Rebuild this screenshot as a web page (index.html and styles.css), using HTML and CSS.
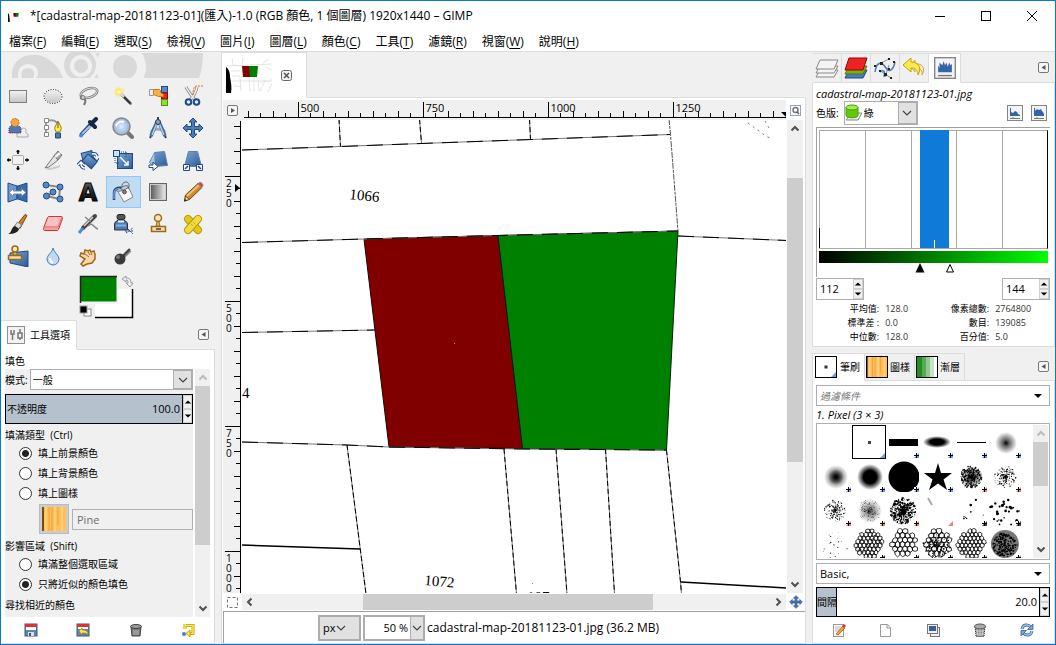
FILE: index.html
```html
<!DOCTYPE html>
<html lang="zh-Hant">
<head>
<meta charset="utf-8">
<meta name="viewport" content="width=device-width, initial-scale=1">
<title>*[cadastral-map-20181123-01](匯入)-1.0 – GIMP</title>
<link rel="stylesheet" href="styles.css">
</head>
<body>
<svg class="defs" aria-hidden="true">
  <defs>
    <linearGradient id="steel" x1="0" y1="0" x2="1" y2="1"><stop offset="0" stop-color="#7ba6d4"/><stop offset="1" stop-color="#2c5b96"/></linearGradient>
    <linearGradient id="silver" x1="0" y1="0" x2="0" y2="1"><stop offset="0" stop-color="#f4f4f4"/><stop offset="1" stop-color="#c4c4c4"/></linearGradient>
    <linearGradient id="fade" x1="0" y1="0" x2="1" y2="0"><stop offset="0" stop-color="#505050"/><stop offset="1" stop-color="#f4f4f4"/></linearGradient>
    <linearGradient id="dark" x1="0" y1="0" x2="0" y2="1"><stop offset="0" stop-color="#777"/><stop offset="0.5" stop-color="#222"/><stop offset="1" stop-color="#000"/></linearGradient>
    <radialGradient id="lens"><stop offset="0" stop-color="#e0ecfa"/><stop offset="1" stop-color="#8fb3dc"/></radialGradient>
    <radialGradient id="glow"><stop offset="0" stop-color="#fff"/><stop offset="0.4" stop-color="#fbe960"/><stop offset="1" stop-color="#fbe960" stop-opacity="0"/></radialGradient>
    <radialGradient id="soft"><stop offset="0" stop-color="#000"/><stop offset="0.3" stop-color="#000" stop-opacity="0.6"/><stop offset="1" stop-color="#000" stop-opacity="0"/></radialGradient>
    <radialGradient id="firm"><stop offset="0.5" stop-color="#000"/><stop offset="1" stop-color="#000" stop-opacity="0"/></radialGradient>
    <symbol id="chevron" viewBox="0 0 10 10"><path d="M1 3l4 4 4-4" fill="none" stroke="currentColor" stroke-width="1.200"/></symbol>
    <symbol id="arrow-down" viewBox="0 0 10 10"><path d="M1 3h8L5 7z" fill="currentColor"/></symbol>
    <symbol id="arrow-up" viewBox="0 0 10 10"><path d="M1 7h8L5 3z" fill="currentColor"/></symbol>
    <symbol id="scroll" viewBox="0 0 10 10"><path d="M1.500 6.500L5 3l3.500 3.500" fill="none" stroke="currentColor" stroke-width="2"/></symbol>
    <symbol id="collapse" viewBox="0 0 11 11"><rect x=".5" y=".5" width="10" height="10" rx="1.500" fill="#f6f6f6" stroke="#777"/><path d="M7.500 3v5L3.500 5.500z" fill="#555"/></symbol>
    <symbol id="thumb" viewBox="0 0 48 36">
      <rect width="48" height="36" fill="#fff"/>
      <path d="M6 1l1 7 9 1 1-9M0 9l46-2M5 14h12M6 19h11M5 24h41M28 20v14M23 20l1 14M32 22l1 12M14 20l1 14M35 26l4-3 3 2 4-3M34 34l5-10M42 35l4-9M37 6l6-4M40 10l6 3M8 29l8 1" fill="none" stroke="#dedede" stroke-width=".8"/>
      <path d="M0 10c3 2 4 6 4 10 1 5 2 11 1 16H0z" fill="#000"/>
      <path d="M16 9h8l1 11h-8z" fill="#800000"/><path d="M23 9h9l-1 11h-7z" fill="#008000"/>
    </symbol>
    <symbol id="histo" viewBox="0 0 16 16"><rect x=".5" y=".5" width="15" height="15" fill="#f4f4f4" stroke="#858585"/><path d="M3 11V6l1 2V4l2 2 1-3 1 3 1-2 1 3 1-3 1 2 1-1v6z" fill="#3465a4"/><path d="M3 13.500h10" stroke="#777"/></symbol>
    <symbol id="histo-linear" viewBox="0 0 16 16"><rect x=".5" y=".5" width="15" height="15" fill="#f4f4f4" stroke="#858585"/><path d="M3 11V3h1v4l2 1 2-2 2 1 1 2 2 1v1z" fill="#3465a4"/><path d="M3 13.500h10M6 12v2" stroke="#777"/></symbol>
    <symbol id="histo-log" viewBox="0 0 16 16"><rect x=".5" y=".5" width="15" height="15" fill="#f4f4f4" stroke="#858585"/><path d="M3 11V3h1v3l2-2 2 1 2-1 1 2 1 1 1 2v2z" fill="#3465a4"/><path d="M3 13.500h10M6 12v2" stroke="#777"/></symbol>
    <symbol id="pine" viewBox="0 0 24 24" preserveAspectRatio="none"><rect width="24" height="24" fill="#ffbe5a"/><path d="M1 0v24" stroke="#7a4a10" stroke-width="2"/><path d="M4 0v24M13 0v24M20 0v24" stroke="#ffd27a" stroke-width="2"/><path d="M7 0v24M16 0v18" stroke="#f2a03a"/><path d="M10 0v24" stroke="#f9ae48" stroke-width="2"/></symbol>
    <symbol id="cross" viewBox="0 0 22 22"><path d="M11 1l4 4h-2.500v4.500H17V7l4 4-4 4v-2.500h-4.500V17H15l-4 4-4-4h2.500v-4.500H5V15l-4-4 4-4v2.500h4.500V5H7z" fill="#4a7ab8" stroke="#204a87"/></symbol>
  </defs>
</svg>

<div class="app">
  <header class="titlebar">
    <svg class="app-icon" viewBox="0 0 48 36" width="16" height="12" aria-hidden="true"><use href="#thumb"/></svg>
    <h1>*[cadastral-map-20181123-01](匯入)-1.0 (RGB 顏色, 1 個圖層) 1920x1440 – GIMP</h1>
    <div class="window-buttons">
      <button aria-label="最小化"><svg width="12" height="12"><path d="M1 6.500h10" stroke="#000"/></svg></button>
      <button aria-label="最大化"><svg width="12" height="12"><rect x="1.500" y="1.500" width="9" height="9" fill="none" stroke="#000"/></svg></button>
      <button aria-label="關閉"><svg width="12" height="12"><path d="M1 1l10 10M11 1L1 11" stroke="#000"/></svg></button>
    </div>
  </header>

  <nav class="menubar">
    <button>檔案(<u>F</u>)</button><button>編輯(<u>E</u>)</button><button>選取(<u>S</u>)</button><button>檢視(<u>V</u>)</button><button>圖片(<u>I</u>)</button><button>圖層(<u>L</u>)</button><button>顏色(<u>C</u>)</button><button>工具(<u>T</u>)</button><button>濾鏡(<u>R</u>)</button><button>視窗(<u>W</u>)</button><button>說明(<u>H</u>)</button>
  </nav>

  <main class="workspace">
    <aside class="dock left">
      <svg class="banner" height="28" aria-hidden="true">
        <path d="M11 26C10 10 20 3 33 3c13 0 20 8 28 18l2 5zM60 1h142c0 9-1 17-4 25H60z" fill="#d9d9d9"/>
        <path d="M17 26c-1-9 4-14 10-14s10 4 10 9-3 5-5 5z" fill="#f0f0f0"/><path d="M21 26c-2-6 1-10 6-10s8 5 5 10z" fill="#d9d9d9"/>
        <path d="M52 0h10l-3 16z" fill="#f0f0f0"/>
        <circle cx="78" cy="13" r="20" fill="#f0f0f0"/><circle cx="79" cy="13" r="16" fill="#d9d9d9"/><circle cx="80" cy="14" r="11" fill="#f0f0f0"/><circle cx="80" cy="14" r="7" fill="#d9d9d9"/>
        <circle cx="120" cy="15" r="25" fill="#f0f0f0"/><circle cx="124" cy="15" r="12" fill="#d9d9d9"/>
        <path d="M0 26h214v2H0z" fill="#f0f0f0"/>
      </svg>
      <div class="tools">
        <button aria-label="矩形選取"><svg viewBox="0 0 22 22"><rect x="2.500" y="5.500" width="17" height="12" fill="url(#silver)" stroke="#fff"/><rect x="2.500" y="5.500" width="17" height="12" fill="none" stroke="#000" stroke-dasharray="1 1"/></svg></button>
        <button aria-label="橢圓選取"><svg viewBox="0 0 22 22"><ellipse cx="11" cy="11.500" rx="9" ry="7" fill="url(#silver)" stroke="#fff"/><ellipse cx="11" cy="11.500" rx="9" ry="7" fill="none" stroke="#000" stroke-dasharray="1 1.500"/></svg></button>
        <button aria-label="自由選取"><svg viewBox="0 0 22 22"><ellipse cx="12" cy="8" rx="8.500" ry="4.500" fill="none" stroke="#777" stroke-width="2.500" transform="rotate(-18 12 8)"/><ellipse cx="12" cy="8" rx="8.500" ry="4.500" fill="none" stroke="#ddd" transform="rotate(-18 12 8)"/><path d="M5 11c-2 1-2 3 1 3s3 2 1 6" fill="none" stroke="#777" stroke-width="2"/><circle cx="6" cy="12.500" r="2" fill="#ccc" stroke="#777"/></svg></button>
        <button aria-label="模糊選取"><svg viewBox="0 0 22 22"><path d="M9 9l9.500 9.500" stroke="#888" stroke-width="3" stroke-linecap="round"/><path d="M11 11l7.500 7.500" stroke="#333" stroke-width="2"/><circle cx="7" cy="7" r="6" fill="url(#glow)"/><path d="M8 8l4 4" stroke="#ddd" stroke-width="2"/></svg></button>
        <button aria-label="依顏色選取"><svg viewBox="0 0 22 22"><rect x="14.500" y="1.500" width="6" height="6" fill="#5a8ac6" stroke="#204a87"/><rect x="14.500" y="8" width="6" height="6" fill="#e22" stroke="#900"/><rect x="14.500" y="14.500" width="6" height="6" fill="#8ae234" stroke="#4e9a06"/><path d="M2.500 4.500h4v6h-4z" fill="#eee" stroke="#999"/><path d="M6.500 4.500h6l1 1v2l3 2v2h-5l-5-2z" fill="#fcaf3e" stroke="#ce7a1c"/></svg></button>
        <button aria-label="智慧型剪刀"><svg viewBox="0 0 22 22"><path d="M4 2c2 4 5 8 9 13M15 2c-1 5-3 9-7 13" stroke="#888" stroke-width="3" fill="none"/><path d="M4 2c2 4 5 8 9 13M15 2c-1 5-3 9-7 13" stroke="#eee" fill="none" stroke-width="1.500"/><circle cx="6.500" cy="17" r="2.800" fill="#e8eef6" stroke="#204a87" stroke-width="2"/><circle cx="14.500" cy="17" r="2.800" fill="#e8eef6" stroke="#204a87" stroke-width="2"/><path d="M11 10c0-6 1-9 4-9h7" stroke="#e0780c" fill="none" stroke-dasharray="2 1"/></svg></button>

        <button aria-label="前景選取"><svg viewBox="0 0 22 22"><path d="M13 14c0-3 6-4 6-1 0 2-1 3 2 4v3H10v-3z" fill="#eee" stroke="#aaa"/><path d="M2 16v-4c0-3 3-4 6-4s6 2 6 4v4z" fill="#4a7ab8"/><path d="M2 16v-4c0-3 3-4 6-4s6 2 6 4v4z" fill="none" stroke="#7a1040" stroke-dasharray="1 1"/><circle cx="8" cy="5.500" r="4" fill="#f5a742" stroke="#b8641c" stroke-dasharray="2 1"/></svg></button>
        <button aria-label="路徑"><svg viewBox="0 0 22 22"><path d="M4 4v14M4 4c8-2 11 0 13 5" stroke="#999" stroke-width="2" fill="none"/><path d="M2.500 1.500h4v4h-4zM2.500 8.500h4v4h-4zM2.500 15.500h4v4h-4z" fill="#fff" stroke="#888"/><path d="M13 10l3-6 3 6c1 2-1 4-1 5h-4c0-1-2-3-1-5z" fill="#fce94f" stroke="#a08000"/><path d="M16 5v6" stroke="#555"/><path d="M13.500 16h5v5h-5z" fill="#4a7ab8" stroke="#204a87"/></svg></button>
        <button aria-label="滴管"><svg viewBox="0 0 22 22"><path d="M4 18L14 7" stroke="#204a87" stroke-width="4"/><path d="M5 17l9-9" stroke="#a9c8ec" stroke-width="2"/><path d="M13 5l5 5M14 7l5-5" stroke="#172a45" stroke-width="4" stroke-linecap="round"/><circle cx="4" cy="18.500" r="2" fill="#4a8ad8"/></svg></button>
        <button aria-label="縮放"><svg viewBox="0 0 22 22"><path d="M15 15l5 5" stroke="#777" stroke-width="4" stroke-linecap="round"/><circle cx="9.500" cy="9.500" r="8.500" fill="url(#lens)" stroke="#888" stroke-width="1.500"/><path d="M4 9c1-4 5-5 8-4" stroke="#fff" fill="none" stroke-width="2"/></svg></button>
        <button aria-label="測量"><svg viewBox="0 0 22 22"><path d="M4 15c4-4 10-4 14 0" stroke="#aaa" stroke-width="3" fill="none"/><path d="M10 5L6 14l-2 5M12 5l4 9 2 5" stroke="#3a69a5" stroke-width="3.500" fill="none"/><path d="M10 6l-5 12M12 6l5 12" stroke="#b7cfea" stroke-width="1.500"/><circle cx="11" cy="5" r="2.500" fill="#7ba6d4" stroke="#333"/><path d="M11 0v3M4 19l-1 2M18 19l1 2" stroke="#444" stroke-width="2"/></svg></button>
        <button aria-label="移動"><svg viewBox="0 0 22 22"><use href="#cross"/></svg></button>

        <button aria-label="對齊"><svg viewBox="0 0 22 22"><rect x="5.500" y="6.500" width="11" height="9" rx="1" fill="#f3f3f3" stroke="#aaa"/><path d="M11 1v4M9.500 2.500h3M11 17v4M9.500 19.500h3M0 11h4M1.500 9.500v3M18 11h4M20 9.500v3" stroke="#000" stroke-width="1.500"/></svg></button>
        <button aria-label="剪裁"><svg viewBox="0 0 22 22"><path d="M3 19L12 7l4 4L7 18z" fill="#e5e5e5" stroke="#777"/><path d="M12 7l4-5 4 4-4 5z" fill="#aaa" stroke="#777"/><path d="M13 8l5-4" stroke="#fff" stroke-width="2"/><path d="M5 20c5 0 10-2 13-3" stroke="#ccc" fill="none" stroke-width="2"/></svg></button>
        <button aria-label="旋轉"><svg viewBox="0 0 22 22"><rect x="5" y="3" width="11" height="9" fill="url(#steel)" stroke="#204a87" transform="rotate(-15 10 7)"/><rect x="7" y="8" width="12" height="9" fill="url(#steel)" stroke="#204a87" transform="rotate(40 13 12)"/><path d="M15 5c3-1 5 0 5 4M17 7l3 3 2-3M1 16l3-3 3 3M4 14c0 3 1 5 4 5" stroke="#204a87" stroke-width="3.500" fill="none"/><path d="M15 5c3-1 5 0 5 4M17 7l3 3 2-3M1 16l3-3 3 3M4 14c0 3 1 5 4 5" stroke="#fff" stroke-width="1.500" fill="none"/></svg></button>
        <button aria-label="縮放圖層"><svg viewBox="0 0 22 22"><rect x="5.500" y="4.500" width="15" height="15" fill="url(#steel)" stroke="#204a87"/><rect x="1.500" y="1.500" width="6" height="6" fill="#cfe0f3" stroke="#204a87"/><path d="M8 8l8 8M12 16h4v-4" stroke="#fff" stroke-width="1.500" fill="none"/><path d="M9 3h6M3 9v5h5M14 3v5" stroke="#204a87" stroke-dasharray="1 1" fill="none"/></svg></button>
        <button aria-label="傾斜"><svg viewBox="0 0 22 22"><path d="M7.500 3.500l10-1 3 14-13 1-5-4z" fill="url(#steel)" stroke="#5a82b3"/><path d="M7 4L3 14l5 3z" fill="#a8c4e2"/><path d="M2 16h4v-3l5 4.500L6 21.500v-3H2z" fill="#fff" stroke="#204a87"/></svg></button>
        <button aria-label="透視"><svg viewBox="0 0 22 22"><path d="M6.500 2.500h9l4 15h-17z" fill="url(#steel)" stroke="#5a82b3"/><path d="M1.500 15.500h6v6h-6zM14.500 15.500h6v6h-6z" fill="#fff" stroke="#204a87"/><path d="M3 20l3-3M19 20l-3-3" stroke="#204a87" stroke-width="1.500"/></svg></button>

        <button aria-label="翻轉"><svg viewBox="0 0 22 22"><path d="M1 2l9 3v13l-9 3z" fill="#6a9bd0" stroke="#204a87"/><path d="M10 5h1l9-3v19l-9-3h-1z" fill="#3a69a5" stroke="#204a87"/><path d="M2 11.500l4.500-4v2.500h8V7.500l4.500 4-4.500 4V13h-8v2.500z" fill="#fff" stroke="#6a8ab0"/></svg></button>
        <button aria-label="籠狀變形"><svg viewBox="0 0 22 22"><path d="M4 4l14 2-1 12-12-3 6-4" stroke="#888" stroke-width="2" fill="none"/><g fill="#5a8ac6" stroke="#204a87"><circle cx="4" cy="4" r="3"/><circle cx="18" cy="6" r="3"/><circle cx="11" cy="11" r="3"/><circle cx="4.500" cy="15" r="3"/><circle cx="18" cy="18" r="3"/></g></svg></button>
        <button aria-label="文字"><svg viewBox="0 0 22 22"><text x="11" y="20" class="letter-icon">A</text></svg></button>
        <button aria-label="填色" aria-pressed="true"><svg viewBox="0 0 22 22"><path d="M5 9l11-4 5 11-9 5z" fill="#f6f6f6" stroke="#888"/><ellipse cx="10.500" cy="7.500" rx="6" ry="1.800" fill="#ccc" stroke="#777" transform="rotate(-20 10.500 7.500)"/><path d="M2 19v-7c0-4 4-6 7-5" stroke="#204a87" stroke-width="2.500" fill="none"/><path d="M2 18v-6c0-3 3-5 6-4" stroke="#9cc0e8" fill="none"/><path d="M10 9c-1-5 1-8 4-8s4 4 2 7" stroke="#666" fill="none"/><circle cx="12.500" cy="11" r="1.800" fill="#888" stroke="#444"/></svg></button>
        <button aria-label="漸層"><svg viewBox="0 0 22 22"><rect x="2.500" y="2.500" width="17" height="17" fill="url(#fade)" stroke="#666"/><rect x="3.500" y="3.500" width="15" height="15" fill="none" stroke="#ccc"/></svg></button>
        <button aria-label="鉛筆"><svg viewBox="0 0 22 22"><path d="M2.500 20l1-6L16 2.500l4 4L8 18z" fill="#c98a34" stroke="#7a4a10"/><path d="M5 15L17 4" stroke="#f0c070" stroke-width="2"/><path d="M16 2.500l2-1c2 0 3 2 3 3l-1.500 2z" fill="#e04040" stroke="#888"/><path d="M2.500 20l1-5 4 3.500z" fill="#f5dca8" stroke="#7a4a10"/><path d="M2 20.500l1-2.500 2 1.500z" fill="#222"/></svg></button>

        <button aria-label="筆刷"><svg viewBox="0 0 22 22"><path d="M9 13L18 1.500l2 1-7 13z" fill="#d08028" stroke="#7a4a10"/><path d="M7.500 13l3-4 4 3-3 4z" fill="#ddd" stroke="#888"/><path d="M1 21c4-1 3-7 7-8l4 3c-1 4-6 5-11 5z" fill="#222"/></svg></button>
        <button aria-label="橡皮擦"><svg viewBox="0 0 22 22"><path d="M6.500 3.500h13c1 0 1 1 1 2l-4 11-1 1h-13c-1 0-1-1-1-2l4-11z" fill="#f4a0a0" stroke="#d83030"/><path d="M7 4h13l-4 9H3z" fill="#fbc0c0"/><path d="M2 14h14l4-10" stroke="#ef7070" fill="none"/></svg></button>
        <button aria-label="噴槍"><svg viewBox="0 0 22 22"><path d="M6 15L18 3" stroke="#444" stroke-width="4" stroke-linecap="round"/><path d="M7 13l9-9" stroke="#ddd" stroke-width="1.500"/><path d="M8 4l6 5M11 13c5-5 5 2 10 3" stroke="#888" stroke-width="1.500" fill="none"/><path d="M2 20l4-5" stroke="#4a8ad8" stroke-width="3"/></svg></button>
        <button aria-label="墨水"><svg viewBox="0 0 22 22"><rect x="5" y="1.500" width="8" height="5" rx="2" fill="#555" stroke="#222"/><path d="M2.500 17v-6c0-3 3-2 3-4h7c0 2 3 1 3 4v6z" fill="#4a7ab8" stroke="#333"/><path d="M6 8.500h6" stroke="#eee" stroke-width="2"/><path d="M4 12.500h10" stroke="#8ab0dc" stroke-width="2"/><path d="M14 20l7-5M16 16l5 5M13 18h8" stroke="#204a87" stroke-dasharray="2 1"/></svg></button>
        <button aria-label="仿製"><svg viewBox="0 0 22 22"><path d="M4.500 13.500h14v5h-14z" fill="#f5dca8" stroke="#9a6a1c" stroke-width="1.500"/><path d="M9 13c1-3 1-4 0-6h4c-1 2-1 3 0 6z" fill="#e8b868" stroke="#9a6a1c"/><circle cx="11" cy="5" r="3.500" fill="#fae6b8" stroke="#9a6a1c" stroke-width="1.500"/><path d="M9 16h5" stroke="#444" stroke-width="1.500"/></svg></button>
        <button aria-label="修復"><svg viewBox="0 0 22 22"><path d="M6 6l10 11" stroke="#b89c00" stroke-width="8" stroke-linecap="round"/><path d="M6 6l10 11" stroke="#e3c81c" stroke-width="6" stroke-linecap="round"/><path d="M16 6L6 17" stroke="#b89c00" stroke-width="8" stroke-linecap="round"/><path d="M16 6L6 17" stroke="#f0da48" stroke-width="6" stroke-linecap="round"/><path d="M9 11l3 3M11 9l3 3" stroke="#b89c00" stroke-dasharray="1 1"/></svg></button>

        <button aria-label="透視仿製"><svg viewBox="0 0 22 22"><path d="M3 8l18-2v16L3 18z" fill="url(#steel)" stroke="#204a87"/><path d="M1.500 10.500h13v4h-13z" fill="#f5dca8" stroke="#9a6a1c" stroke-width="1.500"/><path d="M6 10c1-2 1-3 0-4h4c-1 1-1 2 0 4z" fill="#e8b868" stroke="#9a6a1c"/><circle cx="8" cy="4" r="3" fill="#fae6b8" stroke="#9a6a1c" stroke-width="1.500"/></svg></button>
        <button aria-label="模糊"><svg viewBox="0 0 22 22"><path d="M11 3c1 5 6 7 6 11a6 6 0 0 1-12 0c0-4 5-6 6-11z" fill="#c2d8f2" stroke="#4a7ab8"/><path d="M8 13c0 3 1 4 3 5" stroke="#fff" stroke-width="2" fill="none"/></svg></button>
        <button aria-label="塗抹"><svg viewBox="0 0 22 22"><path d="M4 19l4-5-5-3 1-3 3 1 1-4 3 1 2-1 1 2 3-1 1 3v5l-3 4-5 1-4 2z" fill="#f8d8a8" stroke="#a8641c" stroke-width="1.500"/><path d="M8 9l4 3M11 7l2 3M14 8l1 2" stroke="#a8641c"/></svg></button>
        <button aria-label="加亮/加深"><svg viewBox="0 0 22 22"><path d="M12 11l6-6" stroke="#888" stroke-width="4"/><path d="M10 12l8-8" stroke="#444" stroke-width="2"/><circle cx="8" cy="14" r="5.500" fill="#3a3a3a"/><circle cx="6" cy="12" r="2" fill="#777"/></svg></button>
      </div>

      <div class="colors">
        <svg width="56" height="44" role="img" aria-label="前景與背景顏色">
          <rect x="16" y="14" width="38" height="28" fill="#fff"/><path d="M16 42.500h37.500V14" fill="none" stroke="#000" stroke-width="1.500"/>
          <rect x="1" y="1" width="38" height="28" fill="#f4f4f4"/><rect x="1.500" y="1.500" width="36" height="25" fill="#008000"/><path d="M1.500 28V1.500H38" fill="none" stroke="#222" stroke-width="1.500"/>
          <rect x="5" y="34" width="7" height="7" fill="#fff" stroke="#888"/><rect x="1" y="31" width="7" height="7" fill="#000" stroke="#999"/>
          <path d="M43 4l4-3v2c4 0 5 2 5 5h2l-3 4-4-4h2c0-2 0-3-2-3v2z" fill="#f0f0f0" stroke="#999"/>
        </svg>
      </div>

      <div class="tabs">
        <button class="tab active"><svg width="18" height="18"><rect x=".5" y=".5" width="17" height="17" fill="#f2f2f2" stroke="#909090"/><path d="M4 4v4h3V4M5.500 8v6M11 7h4v5h-4zM13 7V3M13 12v2" fill="none" stroke="#777" stroke-width="1.500"/></svg>工具選項</button>
        <span class="tab-space"></span>
        <button class="icon-button" aria-label="設定此分頁"><svg width="11" height="11"><use href="#collapse"/></svg></button>
      </div>
      <section class="panel options">
        <h2>填色</h2>
        <div class="scroll-row">
          <div class="option-list">
            <div class="mode-row"><label for="mode">模式:</label>
              <span class="combo"><select id="mode"><option>一般</option></select><span class="combo-arrow"><svg width="10" height="10"><use href="#chevron"/></svg></span></span>
            </div>
            <div class="scale full"><label for="opacity">不透明度</label><input id="opacity" value="100.0"><span class="steps"><button aria-label="增加"><svg width="8" height="8"><use href="#arrow-up"/></svg></button><button aria-label="減少"><svg width="8" height="8"><use href="#arrow-down"/></svg></button></span></div>
            <fieldset><legend>填滿類型&nbsp; (Ctrl)</legend>
              <label><input type="radio" name="fill" checked>填上前景顏色</label>
              <label><input type="radio" name="fill">填上背景顏色</label>
              <label><input type="radio" name="fill">填上圖樣</label>
            </fieldset>
            <div class="pattern-row"><button aria-label="圖樣"><svg width="24" height="24"><use href="#pine"/></svg></button><input value="Pine" aria-label="圖樣名稱" disabled></div>
            <fieldset class="area"><legend>影響區域&nbsp; (Shift)</legend>
              <label><input type="radio" name="area">填滿整個選取區域</label>
              <label><input type="radio" name="area" checked>只將近似的顏色填色</label>
            </fieldset>
            <fieldset><legend>尋找相近的顏色</legend><label><input type="checkbox" aria-label="填滿透明區域"></label></fieldset>
          </div>
          <div class="vbar"><svg width="10" height="10" class="faint"><use href="#scroll"/></svg><i class="thumb options-thumb"></i><svg width="10" height="10" class="flip"><use href="#scroll"/></svg></div>
        </div>
        <div class="actions">
          <button aria-label="儲存"><svg width="14" height="14"><rect x="1" y="1" width="12" height="12" fill="#5f84ad" stroke="#355a85"/><path d="M1 1h12v3H1z" fill="#d33"/><path d="M2 4h10v3H2z" fill="#fff"/><path d="M4 9h6v4H4z" fill="#ddd"/><path d="M5 10h2v3H5z" fill="#355a85"/></svg></button>
          <button aria-label="還原"><svg width="14" height="14"><rect x="1" y="1" width="12" height="12" fill="#5f84ad" stroke="#355a85"/><path d="M1 1h12v3H1z" fill="#d33"/><path d="M2 4h10v2H2z" fill="#fff"/><path d="M3 8l3-3v2c4 0 6 1 6 5-1-2-3-2-6-2v2z" fill="#fce94f" stroke="#a88400" stroke-width=".7"/></svg></button>
          <button aria-label="刪除"><svg width="14" height="14"><path d="M2 4h10l-1 9H3z" fill="#777" stroke="#444"/><ellipse cx="7" cy="3.500" rx="5.500" ry="2" fill="#999" stroke="#444"/><path d="M5 7v5M7 7v5M9 7v5" stroke="#bbb"/></svg></button>
          <button aria-label="重設"><svg width="14" height="14"><path d="M4 2.500h8v8H9M4 1v5" fill="none" stroke="#c4a000" stroke-width="3"/><path d="M4 2.500h8v8H9M4 1v5" fill="none" stroke="#fce94f" stroke-width="1.500"/><path d="M9 7v7l-4-3.500z" fill="#fce94f" stroke="#c4a000"/><circle cx="3" cy="11" r="2" fill="#4a7ab8"/></svg></button>
        </div>
      </section>
    </aside>

    <section class="image-window">
      <div class="tabs image-tabs"><button class="tab active"><svg width="48" height="36" role="img" aria-label="cadastral-map-20181123-01"><use href="#thumb"/></svg><svg width="11" height="11"><rect x=".5" y=".5" width="10" height="10" rx="2" fill="#f2f2f2" stroke="#666"/><path d="M3 3l5 5M8 3L3 8" stroke="#555" stroke-width="1.500"/></svg></button><span class="tab-space"></span></div>
      <div class="panel view">
        <button class="icon-button corner" aria-label="影像選單"><svg width="11" height="11"><rect x=".5" y=".5" width="10" height="10" rx="1.500" fill="#f6f6f6" stroke="#777"/><path d="M4 3v5l4-2.500z" fill="#555"/></svg></button>
        <svg class="ruler" id="ruler-x" width="100%" height="20"></svg>
        <button class="icon-button" aria-label="隨視窗縮放"><svg width="11" height="11"><rect x=".5" y=".5" width="10" height="10" fill="none" stroke="#204a87" stroke-dasharray="1 1"/><circle cx="5.500" cy="5" r="2.500" fill="none" stroke="#777" stroke-width="1.500"/><path d="M7 7l2 2" stroke="#555" stroke-width="1.500"/></svg></button>
        <svg class="ruler" id="ruler-y" width="18" height="100%"></svg>
        <svg class="canvas" width="100%" height="100%" role="img" aria-label="地籍圖">
          <defs>
            <path id="lots-across" d="M241 150l98-3.500 81-3 110-4 139-5M241 242.500l122-3.500 134-3.500L677 231M677 236l109 4.500M241 332.500l133-2.500M241 442l105 3 42 2M388 447l134 2 143 1"/>
            <path id="lots-down" d="M338 119l1.500 27.500M418.500 119l2 24.500M528.500 119l1 20M346 445l19 149M503 449l12.500 145M555 449l11 145M604.500 449l9 145M665.500 450l14 132 1 12"/>
          </defs>
          <g transform="translate(-240 -120)">
            <path d="M363 239l134-3.500 24.500 213L388 447z" fill="#800000" stroke="#200000"/>
            <path d="M497 235.500l180-4.500-11.500 219-144-1.500z" fill="#008000" stroke="#002000"/>
            <g fill="none">
              <g stroke="#777"><use href="#lots-across"/><use href="#lots-down"/></g>
              <g stroke="#000"><use href="#lots-across" stroke-dasharray="16 9"/><use href="#lots-down" stroke-dasharray="5 3"/></g>
              <path d="M668 119l1.500 15.500L677 231" stroke="#555" stroke-dasharray="6 1 3 1"/>
              <path d="M241 545l118 4M680 582l106 6" stroke="#000" stroke-width="1.500"/>
              <path d="M747 123l11 8 8 6 6 1M764 121l4 7" stroke="#777" stroke-dasharray="2 4"/>
            </g>
            <path d="M453 343h1v1h-1z" fill="#c88"/><path d="M531 583h1v1h-1z" fill="#888"/>
            <g class="lot"><text x="348" y="199" transform="rotate(6 348 199)">1066</text><text x="423" y="585" transform="rotate(5 423 585)">1072</text><text x="241" y="398">4</text><text x="526" y="602">107</text></g>
          </g>
        </svg>
        <div class="vbar canvas-vbar"><svg width="10" height="10"><use href="#scroll"/></svg><i class="thumb"></i><svg width="10" height="10" class="flip"><use href="#scroll"/></svg></div>
        <button class="icon-button corner" aria-label="快速遮罩"><svg width="11" height="11"><rect x=".5" y=".5" width="10" height="10" fill="none" stroke="#777" stroke-dasharray="3 2"/></svg></button>
        <div class="hbar"><svg width="10" height="10" class="left-arrow"><use href="#scroll"/></svg><i class="thumb"></i><svg width="10" height="10" class="right-arrow"><use href="#scroll"/></svg></div>
        <button class="icon-button" aria-label="導覽"><svg width="14" height="14"><use href="#cross"/></svg></button>
        <footer class="status">
          <span class="combo unit"><select aria-label="單位"><option>px</option></select><span class="combo-arrow"><svg width="10" height="10"><use href="#chevron"/></svg></span></span>
          <span class="combo zoom"><input value="50 %" aria-label="縮放比例"><span class="combo-arrow"><svg width="10" height="10"><use href="#chevron"/></svg></span></span>
          <output>cadastral-map-20181123-01.jpg (36.2 MB)</output>
        </footer>
      </div>
    </section>

    <aside class="dock right">
      <div class="tabs icon-tabs">
        <button class="tab" aria-label="圖層"><svg width="24" height="24"><g fill="#f4f4f4" stroke="#888"><path d="M5 14h18l-4 7H1z"/><path d="M5 10h18l-4 7H1z"/><path d="M5 4h18l-4 9H1z"/></g></svg></button>
        <button class="tab" aria-label="色版"><svg width="24" height="24"><path d="M5 14h18l-4 8H1z" fill="#4a7ab8" stroke="#204a87"/><path d="M5 10h18l-4 8H1z" fill="#73b216" stroke="#4e7a06"/><path d="M5 2h18l-4 12H1z" fill="#e22" stroke="#900"/></svg></button>
        <button class="tab" aria-label="路徑"><svg width="24" height="24"><path d="M2 10l14-7M6 14l12 8M12 21l4-12" fill="none" stroke="#777" stroke-width=".8"/><path d="M2 16c2-12 7-10 11-4s8 0 9-6M7 16c5-4 5 2 4 5" fill="none" stroke="#4a7ab8" stroke-width="1.500"/><g fill="#222"><rect x="7" y="6" width="3" height="3"/><rect x="15" y="2" width="2" height="2"/><rect x="1" y="9" width="2" height="2"/><rect x="20" y="5" width="2" height="2"/><rect x="15" y="12" width="2" height="2"/><rect x="6" y="14" width="2" height="2"/><rect x="11" y="17" width="3" height="3"/><rect x="17" y="21" width="2" height="2"/></g></svg></button>
        <button class="tab" aria-label="復原紀錄"><svg width="24" height="24"><path d="M8 10l5-6v4c7-1 11 4 7 11 1-5-2-7-7-7v4z" fill="#fff3b0" stroke="#c4a860"/><path d="M1 9l8-7v4c8 0 11 6 7 13 0-5-3-7-7-7v4z" fill="#fce94f" stroke="#c4a000"/></svg></button>
        <button class="tab active" aria-label="色階分佈圖"><svg width="22" height="22"><use href="#histo"/></svg></button>
        <span class="tab-space"></span>
        <button class="icon-button" aria-label="設定此分頁"><svg width="11" height="11"><use href="#collapse"/></svg></button>
      </div>
      <section class="panel histogram">
        <p class="file-name">cadastral-map-20181123-01.jpg</p>
        <div class="channel-row">
          <label for="channel">色版:</label>
          <span class="combo"><svg width="17" height="18"><path d="M6 9h11l-4 7H1z" fill="#eee" stroke="#888"/><path d="M1 3.500v8c0 3 12 3 12 0v-8" fill="#62c80c" stroke="#4e9a06"/><ellipse cx="7" cy="3.500" rx="6" ry="2.500" fill="#9cf04a" stroke="#4e9a06"/></svg><select id="channel"><option>綠</option></select><span class="combo-arrow"><svg width="10" height="10"><use href="#chevron"/></svg></span></span>
          <span class="spacer"></span>
          <button aria-label="線性"><svg width="16" height="16"><use href="#histo-linear"/></svg></button>
          <button aria-label="對數"><svg width="16" height="16"><use href="#histo-log"/></svg></button>
        </div>
        <div class="graph-frame">
          <div class="graph"><i></i><i></i><i></i><i></i><i></i><b class="range"></b><b class="first-bin"></b></div>
          <div class="ramp"></div>
          <div class="handles"><svg class="low" width="11" height="10"><path d="M5.500 0L10 9.500H1z" fill="#000"/></svg><svg class="high" width="11" height="10"><path d="M5.500 1.500L9 9H2z" fill="#fff" stroke="#000"/></svg></div>
        </div>
        <div class="range-row">
          <span class="spin"><input value="112" aria-label="下限"><span class="steps"><button aria-label="增加"><svg width="8" height="8"><use href="#arrow-up"/></svg></button><button aria-label="減少"><svg width="8" height="8"><use href="#arrow-down"/></svg></button></span></span>
          <span class="spin"><input value="144" aria-label="上限"><span class="steps"><button aria-label="增加"><svg width="8" height="8"><use href="#arrow-up"/></svg></button><button aria-label="減少"><svg width="8" height="8"><use href="#arrow-down"/></svg></button></span></span>
        </div>
        <table class="stats">
          <tr><th>平均值:</th><td>128.0</td><th>像素總數:</th><td>2764800</td></tr>
          <tr><th>標準差 :</th><td>0.0</td><th>數目:</th><td>139085</td></tr>
          <tr><th>中位數:</th><td>128.0</td><th>百分值:</th><td>5.0</td></tr>
        </table>
      </section>

      <div class="tabs brush-tabs">
        <button class="tab active"><svg width="22" height="22"><rect x=".5" y=".5" width="21" height="21" fill="#fff" stroke="#000"/><path d="M9.500 9.500h3v3h-3z" fill="#333"/><path d="M21 16v5h-5z" fill="#7b93ea"/></svg>筆刷</button>
        <button class="tab"><svg width="22" height="22"><use href="#pine"/><rect x=".5" y=".5" width="21" height="21" fill="none" stroke="#000"/></svg>圖樣</button>
        <button class="tab"><svg width="22" height="22"><rect width="22" height="22" fill="#fff"/><path d="M0 0h7v22H0z" fill="#209020"/><path d="M6 0h4v22H6z" fill="#58a858"/><path d="M10 0h4v22h-4z" fill="#90c890"/><path d="M14 0h4v22h-4z" fill="#c8e4c8"/><rect x=".5" y=".5" width="21" height="21" fill="none" stroke="#000"/></svg>漸層</button>
        <span class="tab-space"></span>
        <button class="icon-button" aria-label="設定此分頁"><svg width="11" height="11"><use href="#collapse"/></svg></button>
      </div>
      <section class="panel brushes">
        <span class="combo entry filter"><input placeholder="過濾條件" aria-label="過濾條件"><svg width="10" height="10"><use href="#arrow-down"/></svg></span>
        <p class="brush-name">1. Pixel (3 × 3)</p>
        <div class="brush-view"><div class="brush-grid" id="brush-grid"></div>
          <div class="vbar"><svg width="10" height="10" class="faint"><use href="#scroll"/></svg><i class="thumb brush-thumb"></i><svg width="10" height="10" class="flip"><use href="#scroll"/></svg></div>
        </div>
        <span class="combo entry"><input value="Basic," aria-label="標籤"><svg width="10" height="10"><use href="#arrow-down"/></svg></span>
        <div class="scale spacing"><label for="spacing">間隔</label><input id="spacing" value="20.0"><span class="steps"><button aria-label="增加"><svg width="8" height="8"><use href="#arrow-up"/></svg></button><button aria-label="減少"><svg width="8" height="8"><use href="#arrow-down"/></svg></button></span></div>
        <div class="actions">
          <button aria-label="編輯"><svg width="14" height="14"><rect x="1.500" y="1.500" width="10" height="12" fill="#fafafa" stroke="#999"/><path d="M3 4h6M3 6h5M3 8h4" stroke="#bbb"/><path d="M4 11L11 3l2 2-7 7z" fill="#f5a030" stroke="#a85010" stroke-width=".7"/><path d="M10 3l2-2 2 2-2 2z" fill="#d33"/></svg></button>
          <button aria-label="新增"><svg width="14" height="14"><path d="M1.500 1.500h7l3 3v9h-10z" fill="#fdfdfd" stroke="#999"/><path d="M8 1.500V5h4" fill="#eee" stroke="#999"/></svg></button>
          <button aria-label="再製"><svg width="14" height="14"><rect x="4.500" y="4.500" width="9" height="9" fill="#eee" stroke="#777"/><rect x="1.500" y="1.500" width="10" height="9" fill="#eee" stroke="#777"/><rect x="3" y="3" width="7" height="5" fill="#3a5f97"/></svg></button>
          <button aria-label="刪除"><svg width="14" height="14"><path d="M2 4h10l-1 9.500H3z" fill="#888" stroke="#333" stroke-dasharray="1 1"/><ellipse cx="7" cy="3.500" rx="5.500" ry="2.500" fill="#aaa" stroke="#555"/><path d="M4 6l1 7M7 6v7M10 6l-1 7M3 8h8M3 11h8" stroke="#ccc"/></svg></button>
          <button aria-label="重新整理"><svg width="14" height="14"><path d="M2 6c1-5 6-5 9-2M12 8c-1 5-6 5-9 2" fill="none" stroke="#3465a4" stroke-width="3"/><path d="M2 6c1-5 6-5 9-2M12 8c-1 5-6 5-9 2" fill="none" stroke="#9cc0e8" stroke-width="1.500"/><path d="M13 1v5.500H7.500zM1 13V7.500h5.500z" fill="#7ba6d4" stroke="#3465a4" stroke-width=".8"/></svg></button>
        </div>
      </section>
    </aside>
  </main>
</div>
<script src="app.js"></script>
</body>
</html>
```

FILE: styles.css
```css
* { box-sizing: border-box; }

body {
  margin: 0;
  background: #f0f0f0;
  color: #000;
  font: 11px/14px "Open Sans", "Noto Sans CJK TC", sans-serif;
}

button, input, select {
  margin: 0;
  padding: 0;
  border: 0;
  border-radius: 0;
  background: none;
  color: inherit;
  font: inherit;
  appearance: none;
  outline: none;
}

input, select { min-width: 0; flex: 1; width: 0; }
svg { display: block; flex: none; }
p, h1, h2, fieldset { margin: 0; padding: 0; border: 0; font-size: inherit; font-weight: normal; }
fieldset { min-width: 0; }
legend { padding: 0; }

.defs { position: absolute; width: 0; height: 0; }

.app {
  display: flex;
  flex-direction: column;
  height: 100vh;
  min-height: 600px;
  border: 1px solid #0a78d7;
}

/* Title and menu */
.titlebar {
  display: flex;
  align-items: center;
  height: 30px;
  padding-left: 7px;
  gap: 6px;
  background: #fff;
  font-size: 12px;
}
.titlebar h1 { flex: 1; line-height: 20px; white-space: nowrap; overflow: hidden; }
.window-buttons { display: flex; }
.window-buttons button { width: 46px; height: 30px; display: grid; place-items: center; }

.menubar {
  display: flex;
  gap: 7px;
  height: 21px;
  padding: 1px 4px 0;
  background: #fff;
  border-bottom: 1px solid #dcdcdc;
  font-size: 12px;
}
.menubar button { padding: 0 4px; white-space: nowrap; }
.menubar u { text-underline-offset: 2px; }

.workspace { display: flex; flex: 1; min-height: 0; }
.dock { display: flex; flex-direction: column; min-height: 0; }
.left { flex: 0 0 214px; }
.right { flex: 0 0 243px; }
.image-window { flex: 1; min-width: 0; display: flex; flex-direction: column; margin: 0 6px; }

/* Notebook parts */
.tabs { display: flex; align-items: stretch; }
.tab {
  display: flex;
  align-items: center;
  gap: 4px;
  border: 1px solid #dcdcdc;
  border-left: 0;
  font-size: 10px;
  white-space: nowrap;
}
.tab.active { background: #fff; border-bottom-color: #fff; }
.tab-space { flex: 1; border-bottom: 1px solid #dcdcdc; }
.tabs .icon-button { width: 24px; border-bottom: 1px solid #dcdcdc; }
.icon-button { display: grid; place-items: center; }
.panel { background: #fff; border: 1px solid #dcdcdc; border-top: 0; }

/* Shared controls */
.combo { display: flex; align-items: stretch; background: #fff; border: 1px solid #adadb3; }
.combo-arrow { width: 19px; display: grid; place-items: center; background: #e1e1e1; border: 1px solid #adadad; color: #444; }
.steps { display: flex; flex-direction: column; width: 10px; background: #f0f0f0; }
.steps button { flex: 1; display: grid; place-items: center; border: 1px solid #d0d0d0; }

.vbar {
  width: 15px;
  display: flex;
  flex-direction: column;
  align-items: center;
  padding: 4px 0;
  background: #f0f0f0;
  color: #505050;
}
.vbar .flip { margin-top: auto; transform: rotate(180deg); }
.faint { color: #bbb; }
.thumb { background: #cdcdcd; }
.vbar .thumb { width: 15px; margin-top: 3px; }
.vbar .faint { color: #bbb; }

.scale { display: flex; align-items: stretch; height: 30px; border: 1px solid #000; background: #fff; }
.scale label { align-self: center; }
.scale input { text-align: right; padding-right: 2px; font-size: 11px; }
.scale .steps { border-left: 1px solid #000; }

.actions { display: flex; justify-content: space-around; align-items: center; height: 26px; }

/* Toolbox */
.banner { width: 100%; }
.tools { display: grid; grid-template-columns: repeat(6, 35px); grid-auto-rows: 32px; }
.tools button { display: grid; place-items: center; padding-right: 1px; border: 1px solid transparent; }
.tools svg { width: 22px; height: 22px; }
.tools [aria-pressed="true"] { background: #c0dcf3; border-color: #90c8f6; }
.letter-icon { font: bold 24px "DejaVu Sans", sans-serif; text-anchor: middle; fill: url(#dark); stroke: #000; }
.colors { display: flex; justify-content: center; height: 48px; padding: 3px 2px 0 0; }

.left .tab { width: 76px; height: 30px; padding-left: 6px; gap: 5px; }

/* Tool options */
.options { flex: 1; min-height: 0; display: flex; flex-direction: column; padding-left: 4px; border-left: 0; font-size: 10px; }
.options h2 { height: 19px; line-height: 22px; }
.scroll-row { flex: 1; min-height: 0; display: flex; gap: 2px; padding-right: 4px; }
.option-list { flex: 1; min-width: 0; overflow: hidden; background: #f0f0f0; }
.mode-row { display: flex; align-items: center; gap: 2px; margin-bottom: 4px; }
.mode-row .combo { flex: 1; height: 21px; }
.mode-row select { padding-left: 2px; }
.full { background: #b5c2cd; }
.full label { padding-left: 1px; }
.option-list legend { height: 19px; line-height: 22px; }
.option-list fieldset label { display: flex; align-items: center; gap: 6px; height: 20px; padding-left: 14px; }
.option-list [type="radio"], .option-list [type="checkbox"] { flex: none; width: 13px; height: 13px; border: 1px solid #333; background: #fff; }
.option-list [type="radio"] { border-radius: 50%; }
.option-list [type="radio"]:checked { background: radial-gradient(circle, #222 3px, #fff 4px); }
.pattern-row { display: flex; align-items: center; gap: 3px; padding-left: 34px; margin-top: 1px; }
.pattern-row button { width: 30px; height: 30px; display: grid; place-items: center; background: #ccc; border: 1px solid #bbb; }
.pattern-row input { height: 21px; padding-left: 4px; border: 1px solid #b0b0b8; color: #6d6d6d; font-size: 11px; }
.area legend { height: 20px; line-height: 24px; }
.options-thumb { height: 159px; }

/* Image window */
.image-tabs { height: 46px; }
.image-tabs .tab { width: 86px; padding-left: 4px; gap: 7px; border-left: 1px solid #dcdcdc; }
.view {
  flex: 1;
  min-height: 0;
  display: grid;
  grid-template-columns: 18px minmax(0, 1fr) 19px;
  grid-template-rows: 20px minmax(0, 1fr) 18px 32px;
  padding: 2px 0 0 1px;
}
.ruler { background: #f0f0f0; }
.ruler text { font-size: 11px; }
#ruler-y text { font-size: 10px; }
.corner:first-child { background: #f0f0f0; }
.canvas { background: #fff; overflow: hidden; }
.lot { font: 15px "Liberation Serif", serif; }
.canvas-vbar { width: 16px; margin-left: 1px; }
.canvas-vbar .thumb { flex: 0 0 61%; width: 16px; margin-top: 44px; }
.hbar { display: flex; align-items: center; height: 16px; margin: 1px 0 0 1px; padding: 0 3px; background: #f0f0f0; color: #505050; }
.hbar .thumb { flex: 0 0 54%; height: 16px; margin-left: 20%; }
.left-arrow { transform: rotate(-90deg); }
.right-arrow { transform: rotate(90deg); margin-left: auto; }
.status {
  grid-column: 1 / -1;
  display: flex;
  align-items: center;
  gap: 2px;
  padding-left: 94px;
  border-top: 1px solid #a0a0a0;
  border-left: 1px solid #a0a0a0;
  font-size: 12px;
}
.status .combo { height: 26px; border: 2px solid #adadb0; font-size: 11px; }
.status .unit { width: 43px; background: #e1e1e1; }
.unit select { padding-left: 3px; }
.unit .combo-arrow { width: 23px; border: 0; justify-items: start; }
.status .zoom { width: 62px; }
.zoom input { text-align: right; padding-right: 2px; }
.zoom .combo-arrow { width: 13px; border-width: 0 0 0 1px; }
.status output { white-space: nowrap; }

/* Histogram */
.icon-tabs { height: 31px; padding: 1px 0 0 1px; }
.icon-tabs .tab { width: 29px; justify-content: center; }
.icon-tabs .tab.active { width: 32px; }
.histogram { padding: 4px 4px 2px 3px; }
.file-name, .brush-name { font-style: italic; }
.channel-row { display: flex; align-items: center; gap: 5px; height: 24px; margin-bottom: 2px; font-size: 10px; }
.channel-row .combo { width: 74px; height: 24px; align-items: center; }
.channel-row .combo-arrow { align-self: stretch; }
.channel-row select { padding-left: 2px; }
.channel-row button { margin-right: 3px; }
.spacer { flex: 1; }
.graph-frame { border: solid #a0a0a0; border-width: 1px 0 0 1px; padding: 2px; }
.graph { position: relative; display: grid; grid-template-columns: repeat(5, 1fr); height: 119px; border: 1px solid #a8a8a8; border-right-color: #000; }
.graph i + i { border-left: 1px solid #a8a8a8; }
.range { position: absolute; top: -1px; bottom: 0; left: 44%; width: 13%; background: linear-gradient(#fff, #fff) 50% 100% / 1px 8px no-repeat #0f7ad8; }
.first-bin { position: absolute; left: -1px; bottom: 0; width: 1px; height: 20px; background: #000; }
.ramp { height: 12px; margin-top: 2px; background: linear-gradient(90deg, #000, #0f0); }
.handles { position: relative; height: 12px; }
.handles svg { position: absolute; top: 0; transform: translateX(-50%); }
.low { left: 44%; }
.high { left: 57%; }
.range-row { display: flex; justify-content: space-between; margin: 1px 0 2px; }
.spin { display: flex; width: 48px; height: 22px; border: 1px solid #adadb3; }
.spin input { padding-left: 3px; }
.stats { width: 100%; border-collapse: collapse; table-layout: fixed; font-size: 9px; line-height: 14px; }
.stats th, .stats td { padding: 0; font-weight: normal; text-align: right; white-space: nowrap; }
.stats th { width: 27%; }
.stats td { width: 20%; text-align: left; padding-left: 6px; color: #333; }
.stats td:last-child { width: 26%; }

/* Brushes */
.brush-tabs { height: 28px; margin-top: 6px; }
.brush-tabs .tab { width: 50px; gap: 2px; padding: 0 1px; }
.brush-tabs .tab.active { width: 53px; border-left: 1px solid #dcdcdc; gap: 3px; padding: 0 2px; }
.brushes { flex: 1; min-height: 0; display: flex; flex-direction: column; padding: 4px 4px 0 3px; }
.entry { height: 21px; align-items: center; padding: 0 6px 0 3px; }
.entry.filter { font-size: 10px; font-style: italic; }
.filter input::placeholder { color: #777; }
.brush-name { margin: 2px 0; line-height: 13px; }
.brush-view { flex: 1; min-height: 0; display: flex; margin-bottom: 3px; border: 1px solid #adadb3; padding: 1px; }
.brush-grid { flex: 1; overflow: hidden; display: grid; grid-template-columns: repeat(auto-fill, 34px); grid-auto-rows: 34px; }
.brush-grid button { border: 1px solid transparent; }
.brush-grid .selected { border-color: #000; }
.brush-thumb { height: 44px; }
.spacing { margin-top: 3px; background: linear-gradient(90deg, #b5c2cd 19px, #000 19px, #000 20px, #fff 20px); }
.spacing label { width: 20px; white-space: nowrap; font-size: 10px; }
```

FILE: app.js
```js
const NS = "http://www.w3.org/2000/svg";

// Rulers: a tick each 12.5px, with a numbered one each 125px.
function horizontalRuler() {
  let path = "M3 17.500H545";
  let labels = "";
  for (let i = -4; i < 39; i++) {
    const x = Math.floor(57 + i * 12.5) + 0.5;
    const major = i % 10 === 0;
    const size = major ? 15 : i % 2 === 0 ? 6 : 4;
    path += `M${x} 17V${17 - size}`;
    if (major) labels += `<text x="${x + 2}" y="12">${500 + i * 25}</text>`;
  }
  return `<path d="${path}" stroke="#000" stroke-width="1"/><path d="M540 12h5v5z"/>${labels}`;
}

function verticalRuler() {
  let path = "M17.500 1V473";
  let labels = "";
  for (let i = -4; i < 34; i++) {
    const y = Math.floor(56 + i * 12.5) + 0.5;
    const major = i % 10 === 0;
    const size = major ? 15 : i % 2 === 0 ? 6 : 4;
    path += `M17 ${y}H${17 - size}`;
    if (major) {
      String(250 + i * 25).split("").forEach((digit, n) => {
        labels += `<text x="3" y="${y + 10 + n * 10}">${digit}</text>`;
      });
    }
  }
  return `<path d="${path}" stroke="#000"/><path d="M12 64l5 4-5 4z"/>${labels}`;
}

document.getElementById("ruler-x").innerHTML = horizontalRuler();
document.getElementById("ruler-y").innerHTML = verticalRuler();

// Brush previews
let seed = 7;
const rand = () => (seed = (seed * 16807) % 2147483647) / 2147483647;

function splatter(count, radius, size, power = 1) {
  let out = "";
  for (let i = 0; i < count; i++) {
    const angle = rand() * Math.PI * 2;
    const r = Math.pow(rand(), power) * radius;
    const x = 16 + Math.cos(angle) * r;
    const y = 17 + Math.sin(angle) * r;
    out += `<circle cx="${x.toFixed(1)}" cy="${y.toFixed(1)}" r="${(size * (0.4 + rand() * 0.8)).toFixed(2)}"/>`;
  }
  return out;
}

// Rough polygons on a staggered grid, kept inside a disk.
function cells(step) {
  let out = '<g fill="none" stroke="#000" stroke-width="0.8">';
  let row = 0;
  for (let y = -13; y <= 13; y += step * 0.9, row++) {
    for (let x = -13 + (row % 2) * step / 2; x <= 13; x += step) {
      if (x * x + y * y > 180) continue;
      const points = [];
      for (let k = 0; k < 6; k++) {
        const angle = (k / 6) * Math.PI * 2 + 0.5;
        const r = step * (0.45 + rand() * 0.25);
        points.push(`${(16 + x + Math.cos(angle) * r).toFixed(1)},${(16 + y + Math.sin(angle) * r).toFixed(1)}`);
      }
      out += `<polygon points="${points.join(" ")}"/>`;
    }
  }
  return out + "</g>";
}

const blue = "#7b93ea", red = "#f08080";
const brushes = [
  ["", null],
  ['<path d="M15 15h3v3h-3z" fill="#444"/>', "corner"],
  ['<rect x="2" y="13" width="29" height="7"/>', blue],
  ['<ellipse cx="16" cy="16" rx="14" ry="6" fill="url(#firm)"/>', blue],
  ['<path d="M2 16.500h29" stroke="#000"/>', blue],
  ['<circle cx="17" cy="17" r="11" fill="url(#soft)"/>', blue],
  ['<circle cx="17" cy="17" r="12" fill="url(#soft)"/><circle cx="17" cy="17" r="8" fill="url(#soft)"/>', blue],
  ['<circle cx="17" cy="17" r="13" fill="url(#firm)"/>', blue],
  ['<circle cx="17" cy="17" r="15.500"/>', blue],
  ['<path d="M17 3l3 10h11l-8.500 6.500L26 30l-9-6.500L8 30l3.500-10.500L3 13h11z"/>', blue],
  ['<circle cx="17" cy="17" r="11" fill="url(#soft)"/>' + splatter(320, 11, 0.7, 0.8), red],
  [splatter(190, 11, 0.6), red],
  [splatter(200, 11, 0.55), red],
  ['<circle cx="17" cy="17" r="12" fill="url(#soft)" opacity="0.7"/>' + splatter(160, 12, 0.4), red],
  [splatter(420, 13, 0.8, 0.75), red],
  ['<path d="M7 4l4 7" stroke="#aaa" stroke-width="2"/>', "redcorner"],
  [splatter(10, 14, 1, 0.6), "#444"],
  [splatter(28, 15, 1.3, 0.6), "#444"],
  [splatter(20, 14, 0.6, 0.4), null],
  [cells(4) + splatter(60, 13, 0.5, 0.6), "#444"],
  [cells(5), "#444"],
  [cells(5) + splatter(160, 14, 0.7), red],
  [cells(4), red],
  ['<circle cx="16" cy="16" r="14" fill="#777"/>' + splatter(190, 12, 0.9, 0.6), red],
];

const grid = document.getElementById("brush-grid");
brushes.forEach(([drawing, mark], index) => {
  const button = document.createElement("button");
  button.setAttribute("aria-label", `brush ${index}`);
  if (index === 1) button.className = "selected";
  const svg = document.createElementNS(NS, "svg");
  svg.setAttribute("width", "32");
  svg.setAttribute("height", "32");
  let badge = "";
  if (mark === "corner") badge = `<path d="M32 27v5h-5z" fill="${blue}"/>`;
  else if (mark === "redcorner") badge = `<path d="M32 27v5h-5z" fill="${red}"/>`;
  else if (mark) badge = `<path d="M27 32v-5h5v5z" fill="#fff"/><path d="M32 27v5h-5z" fill="${mark}"/><path d="M29.500 27v5M27 29.500h5" stroke="#000"/>`;
  svg.innerHTML = drawing + badge;
  button.append(svg);
  grid.append(button);
});
```
